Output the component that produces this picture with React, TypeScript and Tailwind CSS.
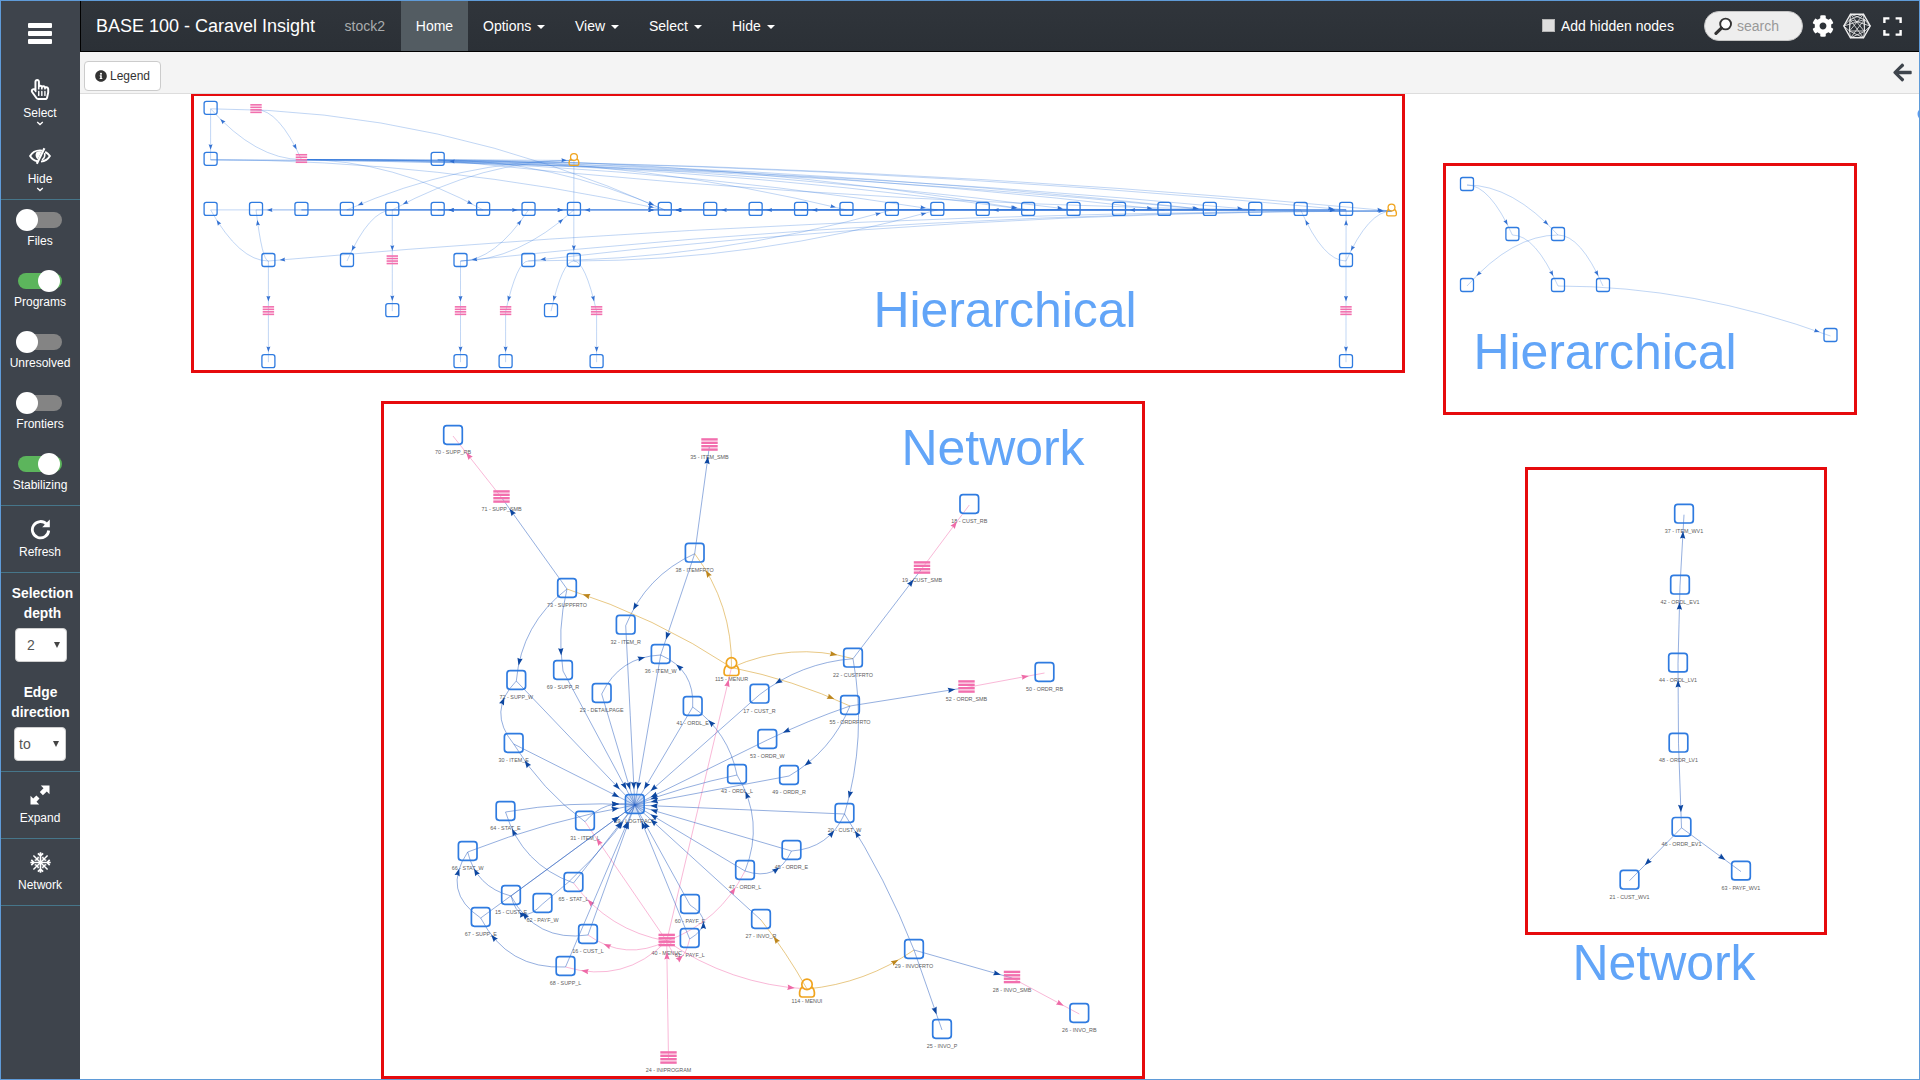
import React from "react";
import { FaCog, FaArrowLeft, FaInfoCircle, FaRegHandPointer } from "react-icons/fa";

type Kind = "box" | "stack" | "person";
type Pt = { x: number; y: number; k: Kind };
type Tone = "blue" | "pink" | "gold" | "light";

const tones: Record<Tone, { line: string; head: string; op: number; headOp: number; w: number }> = {
  blue: { line: "#2b5fc0", head: "#0d47a1", op: 0.5, headOp: 1, w: 1 },
  pink: { line: "#f472b0", head: "#ee6aa7", op: 0.5, headOp: 1, w: 1 },
  gold: { line: "#d69a20", head: "#bd861c", op: 0.55, headOp: 1, w: 1 },
  light: { line: "#2b74d8", head: "#2b6bd0", op: 0.33, headOp: 0.95, w: 0.9 },
};

function Edge({ a, b, c, tone, size, hw, top, bottom }: { a: Pt; b: Pt; c: { x: number; y: number }; tone: Tone; size: number; hw: number; top: number; bottom: number }) {
  const t0 = tones[tone];
  const at = (t: number) => ({
    x: (1 - t) * (1 - t) * a.x + 2 * t * (1 - t) * c.x + t * t * b.x,
    y: (1 - t) * (1 - t) * a.y + 2 * t * (1 - t) * c.y + t * t * b.y,
  });
  let t = 1;
  while (t > 0.02) {
    const p = at(t);
    if (Math.abs(p.x - b.x) > hw || p.y < b.y - top || p.y > b.y + bottom) break;
    t -= 0.002;
  }
  const tip = at(t);
  const back = at(Math.max(0, t - 0.03));
  const ang = (Math.atan2(tip.y - back.y, tip.x - back.x) * 180) / Math.PI;
  return (
    <g>
      <path d={`M${a.x} ${a.y}Q${c.x} ${c.y} ${b.x} ${b.y}`} fill="none" stroke={t0.line} strokeOpacity={t0.op} strokeWidth={t0.w} />
      <path
        d={`M0 0L${-size} ${-size * 0.36}L${-size * 0.88} 0L${-size} ${size * 0.36}Z`}
        fill={t0.head}
        fillOpacity={t0.headOp}
        transform={`translate(${tip.x} ${tip.y}) rotate(${ang})`}
      />
    </g>
  );
}

function Node({ n, big }: { n: Pt; big?: boolean }) {
  const s = big ? 18.6 : 13;
  if (n.k === "box")
    return <rect x={n.x - s / 2} y={n.y - s / 2} width={s} height={s} rx={big ? 3 : 2.2} fill="none" stroke="#2f7be0" strokeWidth={big ? 1.7 : 1.3} />;
  if (n.k === "stack") {
    const w = big ? 16.4 : 11.4;
    const gap = big ? 3.4 : 2.5;
    const h = big ? 2.4 : 1.6;
    return (
      <g fill="#f26fae">
        {[-1.5, -0.5, 0.5, 1.5].map((i) => (
          <rect key={i} x={n.x - w / 2} y={n.y + i * gap - h / 2} width={w} height={h} />
        ))}
      </g>
    );
  }
  const f = big ? 1 : 0.66;
  return (
    <g transform={`translate(${n.x} ${n.y}) scale(${f})`} fill="none" stroke="#f0a41e" strokeWidth={big ? 1.7 : 2}>
      <path d="M-4.6 -1C-7 0.5 -7.6 3 -7.4 6.5Q-7.2 9 -5 9H5Q7.2 9 7.4 6.5C7.6 3 7 0.5 4.6 -1" />
      <circle cx="0" cy="-3.6" r="5.2" />
    </g>
  );
}

const P = (x: number, y: number, k: Kind = "box"): Pt => ({ x, y, k });
const col = (i: number) => 210.6 + 45.42 * i;

const tree: Record<string, Pt> = {
  a0: P(col(0), 107.8),
  s1: P(col(1), 108.6, "stack"),
  b0: P(col(0), 158.8),
  s2: P(col(2), 158.5, "stack"),
  b5: P(col(5), 158.8),
  p8: P(col(8), 159.4, "person"),
  p26: P(col(26), 210, "person"),
  d268: P(268.4, 260),
  d347: P(347, 260),
  d392: P(392.3, 259.8, "stack"),
  d460: P(460.5, 260),
  d528: P(528.3, 260),
  d573: P(573.8, 260),
  d1346: P(1346, 260),
  e268: P(268.4, 310.6, "stack"),
  e392: P(392.3, 310.2),
  e460: P(460.5, 310.6, "stack"),
  e505: P(505.6, 310.6, "stack"),
  e551: P(551, 310.2),
  e596: P(596.6, 310.6, "stack"),
  e1346: P(1346, 310.6, "stack"),
  f268: P(268.4, 361.2),
  f460: P(460.5, 361.2),
  f505: P(505.6, 361.2),
  f596: P(596.6, 361.2),
  f1346: P(1346, 361.2),
};
for (let i = 0; i < 26; i++) if (i !== 9) tree[`c${i}`] = P(col(i), 208.9);

const treeEdges =
  "a0>b0 s2>a0 s1>s2 a0>c10 b0>c10 b5>c10 s2>c6 s2>p8 s2>p26 s2>c25 s2>c22 s2>c21 s2>c18 s2>c19 s2>c16 b0>c23 b0>c22 b5>c14 b5>c18 p26>b5 p8>c3 p8>c4 p8>d573 p26>d268 p26>d460 p26>d528 d528>c15 d573>c16 d268>c0 d268>c1 c4>d347 c4>d392 d460>c7 d460>c8 d460>e460 d528>e505 d573>e551 d573>e596 p26>d1346 d1346>c24 d1346>c25 d268>e268 e268>f268 d392>e392 e460>f460 e505>f505 e596>f596 d1346>e1346 e1346>f1346 c0>c8 c25>c1 c6>c5 c25>c8 c2>c8 c3>c10 c4>c10 c2>c10 c25>c10 c24>c10 c23>c10 c22>c11 c20>c12 c19>c13 c21>c17 c23>c20 c10>c25 c10>c25 c23>c10 c12>p26 c2>c7 c10>c5"
    .split(" ")
    .map((s) => s.split(">"));

const smallTree: Record<string, Pt> = {
  a: P(1467, 184),
  b: P(1512.4, 234),
  c: P(1558, 234),
  d: P(1467, 285),
  e: P(1558, 285),
  f: P(1603, 285),
  g: P(1830.5, 335),
};
const smallEdges = "a>b a>c b>e c>d c>f e>g".split(" ").map((s) => s.split(">"));

const net: Record<string, [number, number, string, Kind?]> = {
  "70": [453, 435, "SUPP_RB"],
  "71": [501.5, 496.5, "SUPP_SMB", "stack"],
  "35": [709.5, 444.5, "ITEM_SMB", "stack"],
  "38": [694.7, 552.7, "ITEMFRTO"],
  "73": [567, 588, "SUPPFRTO"],
  "32": [625.7, 624.7, "ITEM_R"],
  "36": [660.7, 654, "ITEM_W"],
  "69": [563, 670, "SUPP_R"],
  "72": [516.3, 680, "SUPP_W"],
  "23": [601.7, 693, "DETAILPAGE"],
  "115": [731.5, 666.5, "MENUR", "person"],
  "41": [692.7, 706, "ORDL_E"],
  "17": [759.5, 693.7, "CUST_R"],
  "30": [513.7, 743, "ITEM_E"],
  "53": [767.3, 739, "ORDR_W"],
  "18": [969.3, 504, "CUST_RB"],
  "19": [922, 567.5, "CUST_SMB", "stack"],
  "22": [853, 657.7, "CUSTFRTO"],
  "55": [850, 705, "ORDRFRTO"],
  "52": [966.5, 686.5, "ORDR_SMB", "stack"],
  "50": [1044.5, 672, "ORDR_RB"],
  "64": [505.5, 811, "STAT_E"],
  "31": [585, 820.7, "ITEM_L"],
  "66": [467.7, 851, "STAT_W"],
  "65": [573.5, 882, "STAT_L"],
  "15": [511, 895, "CUST_E"],
  "62": [542.5, 903, "PAYF_W"],
  "67": [480.7, 917, "SUPP_E"],
  "16": [588, 934, "CUST_L"],
  "68": [565.5, 966, "SUPP_L"],
  "40": [666.7, 940, "MENUC", "stack"],
  "60": [690, 904, "PAYF_E"],
  "61": [689.7, 938, "PAYF_L"],
  "27": [761, 919, "INVO_R"],
  "114": [807, 988, "MENUI", "person"],
  "24": [668.5, 1057.5, "INIPROGRAM", "stack"],
  "39": [634.8, 804, "LOGTRACE"],
  "43": [737, 774, "ORDL_L"],
  "49": [789, 775, "ORDR_R"],
  "45": [791.5, 850, "ORDR_E"],
  "47": [745, 870, "ORDR_L"],
  "20": [844.5, 813, "CUST_W"],
  "29": [914, 949, "INVOFRTO"],
  "28": [1012, 977, "INVO_SMB", "stack"],
  "26": [1079.3, 1013, "INVO_RB"],
  "25": [942, 1029, "INVO_P"],
  "37": [1684, 513.7, "ITEM_WV1"],
  "42": [1680, 584.7, "ORDL_EV1"],
  "44": [1678, 662.6, "ORDL_LV1"],
  "48": [1678.5, 742.7, "ORDR_LV1"],
  "46": [1681.5, 826.8, "ORDR_EV1"],
  "21": [1629.5, 879.7, "CUST_WV1"],
  "63": [1741, 870.6, "PAYF_WV1"],
};

const netEdges: [string, string, number][] = [
  ["73", "71", 0], ["71", "70", 0], ["38", "35", 0], ["38", "32", 0.2], ["38", "36", 0], ["73", "72", 0.22], ["73", "69", 0.1],
  ["23", "36", -0.3], ["41", "36", 0.35], ["43", "41", 0.2], ["30", "72", -0.45],
  ["115", "73", 0.07], ["115", "38", 0.17], ["115", "22", -0.18], ["115", "55", -0.06], ["40", "115", 0],
  ["22", "17", 0.15], ["22", "19", 0], ["19", "18", 0], ["22", "20", -0.12], ["55", "52", 0], ["52", "50", 0], ["55", "53", 0.03], ["55", "49", -0.17],
  ["45", "20", 0.3], ["29", "20", 0.05], ["114", "27", 0.04], ["114", "29", 0.13], ["29", "28", 0], ["28", "26", 0], ["29", "25", 0],
  ["47", "45", 0.45], ["47", "43", 0.25], ["40", "47", 0.2], ["40", "61", 1.5], ["61", "60", 0.8], ["40", "31", 0], ["31", "30", -0.1],
  ["65", "64", -0.25], ["40", "65", -0.2], ["40", "16", -0.3], ["40", "68", -0.3], ["68", "67", -0.32], ["16", "15", -0.35],
  ["67", "66", -0.5], ["15", "66", -0.3], ["15", "62", 0.9], ["24", "40", 0], ["40", "114", 0.14],
  ["64", "39", -0.06], ["66", "39", -0.05], ["31", "39", -0.3], ["62", "39", 0.08], ["69", "39", 0], ["72", "39", 0], ["23", "39", 0],
  ["32", "39", 0], ["36", "39", 0], ["41", "39", 0], ["17", "39", 0], ["53", "39", 0], ["43", "39", 0.04], ["49", "39", 0], ["20", "39", 0],
  ["45", "39", 0], ["47", "39", 0], ["27", "39", 0], ["60", "39", 0], ["61", "39", 0], ["68", "39", 0], ["16", "39", 0], ["65", "39", 0],
  ["15", "39", 0], ["67", "39", 0], ["30", "39", 0],
  ["42", "37", 0], ["44", "42", 0], ["48", "44", 0], ["48", "46", 0], ["46", "21", 0], ["46", "63", 0],
];

const labelOffset: Record<Kind, number> = { box: 19.4, stack: 14.8, person: 14.8 };

const frames = [
  [192.5, 94.5, 1211, 277],
  [1444.5, 164.5, 411, 249],
  [382.5, 402.5, 761, 675],
  [1526.5, 468.5, 299, 465],
];

const captions: [number, number, string, number][] = [
  [873.5, 327, "Hierarchical", 263],
  [1473.5, 369, "Hierarchical", 263],
  [901.5, 465, "Network", 183],
  [1572.5, 980, "Network", 183],
];

function GraphCanvas() {
  const np = (id: string) => P(net[id][0], net[id][1], net[id][3] ?? "box");
  const tre = (m: Record<string, Pt>, list: string[][]) =>
    list.map(([f, t], i) => {
      const a = { ...m[f], y: m[f].y + 1 };
      const b = { ...m[t], y: m[t].y + 1 };
      return <Edge key={i} a={a} b={b} c={{ x: (a.x + b.x) / 2, y: a.y }} tone="light" size={5.5} hw={m[t].k === "box" ? 10.5 : 7} top={10} bottom={10} />;
    });
  return (
    <svg className="block h-[985px] w-full" viewBox="80 94 1839 985" preserveAspectRatio="xMinYMin slice">
      {frames.map(([x, y, w, h]) => (
        <rect key={x} x={x} y={y} width={w} height={h} fill="none" stroke="#e60a0d" strokeWidth="3" />
      ))}
      {tre(tree, treeEdges)}
      {tre(smallTree, smallEdges)}
      {Object.entries(tree).map(([k, n]) => <Node key={k} n={n} />)}
      {Object.entries(smallTree).map(([k, n]) => <Node key={k} n={n} />)}
      {Object.entries(net).map(([id, [x, y, name, k]]) => (
        <text key={id} x={x} y={y + labelOffset[k ?? "box"]} textAnchor="middle" fontSize="5.4" fill="#5c5c5c" fontFamily="'Liberation Sans', sans-serif">
          {id} - {name}
        </text>
      ))}
      {netEdges.map(([f, t, bend], i) => {
        const a = np(f);
        const b = np(t);
        a.y += 1;
        b.y += 1;
        const dx = b.x - a.x;
        const dy = b.y - a.y;
        const tone: Tone = a.k === "stack" ? "pink" : a.k === "person" ? "gold" : "blue";
        return (
          <Edge key={i} a={a} b={b} c={{ x: (a.x + b.x) / 2 - dy * bend, y: (a.y + b.y) / 2 + dx * bend }} tone={tone} size={7.4}
            hw={b.k === "stack" ? 11 : b.k === "person" ? 12 : 15.5} top={15.5} bottom={b.k === "stack" ? 11 : b.k === "person" ? 12 : 16.5} />
        );
      })}
      {Object.keys(net).map((id) => <Node key={id} n={np(id)} big />)}
      <rect x="626.5" y="795.7" width="16.6" height="16.6" fill="#2f6fd0" fillOpacity="0.22" />
      {captions.map(([x, y, s, w]) => (
        <text key={`${x}`} x={x} y={y} fontSize="50" textLength={w} fill="#62a5f8" fontFamily="'Liberation Sans', Arial, sans-serif">{s}</text>
      ))}
      <circle cx="1924.5" cy="114" r="7" fill="#5b9bf0" />
    </svg>
  );
}

function Caret() {
  return <span className="mt-0.5 ml-[6px] h-0 w-0 border-x-4 border-t-4 border-x-transparent border-t-white" />;
}

function Chevron() {
  return (
    <svg className="mx-auto h-[5px] w-2" viewBox="0 0 8 5" fill="none" stroke="#fff" strokeWidth="1.3"><path d="M1.2 1L4 3.6L6.8 1" /></svg>
  );
}

function Toggle({ on, label }: { on?: boolean; label: string }) {
  return (
    <div className="flex h-[61px] flex-col items-center">
      <div className={on ? "flex h-4 w-11 items-center justify-end rounded-full bg-[#5cb55c] pr-0.5" : "flex h-4 w-11 items-center rounded-full bg-[#848484]"}>
        <span className={on ? "h-[22px] w-[22px] shrink-0 rounded-full bg-white" : "-ml-0.5 h-[22px] w-[22px] shrink-0 rounded-full bg-white"} />
      </div>
      <span className="mt-[5px] text-xs leading-4">{label}</span>
    </div>
  );
}

function SelectBox({ value, className }: { value: string; className: string }) {
  return (
    <div className={`flex h-[34px] w-[52px] items-center justify-between rounded border border-[#cfcfcf] bg-white pr-1.5 text-sm text-[#555] ${className}`}>
      <span>{value}</span>
      <span className="h-0 w-0 border-x-[3px] border-t-[6px] border-x-transparent border-t-[#444]" />
    </div>
  );
}

function Sidebar() {
  return (
    <aside className="flex w-[79px] shrink-0 flex-col bg-[#3e444c] text-white">
      <div className="flex h-[51px] shrink-0 flex-col items-center gap-[3.5px] pt-[22px] pr-px">
        {[0, 1, 2].map((i) => <span key={i} className="h-[4.5px] w-6 shrink-0 rounded-[1px] bg-white" />)}
      </div>
      <div className="flex h-[148px] flex-col border-b border-[#46768a] pt-[27px] pr-px text-center text-xs">
        <FaRegHandPointer className="mx-auto h-[21px] w-[20px]" />
        <span className="mt-[5px] leading-4">Select</span>
        <Chevron />
        <svg className="mx-auto mt-[21px] h-[18px] w-[22px]" viewBox="0 0 22 18" fill="none" stroke="#fff" strokeWidth="1.9">
          <path d="M8.5 14.3C5 13.6 2.6 11.6 1.1 9C3 5.6 6.6 3.4 11 3.4Q12 3.4 13 3.6" />
          <path d="M16.2 4.9Q19.2 6.4 20.9 9C19 12.2 16 14.2 12 14.6" />
          <path d="M15.4 1.2L7.8 16.8" strokeWidth="2.1" />
          <path d="M7.4 5.2C5.8 7.6 6.6 10.8 8.8 12.2L12.6 4.6C10.6 4 8.6 4 7.4 5.2Z" fill="#fff" stroke="none" />
          <path d="M15.6 6C16.2 8.8 15.2 11.4 13 12.8" strokeWidth="1.6" />
        </svg>
        <span className="mt-1.5 leading-4">Hide</span>
        <Chevron />
      </div>
      <div className="h-[306px] border-b border-[#46768a] pt-[12px] pr-px">
        <Toggle label="Files" />
        <Toggle on label="Programs" />
        <Toggle label="Unresolved" />
        <Toggle label="Frontiers" />
        <Toggle on label="Stabilizing" />
      </div>
      <div className="flex h-[67px] flex-col items-center border-b border-[#46768a] pt-[13px] pr-px text-xs">
        <svg className="h-[21px] w-[21px]" viewBox="0 0 21 21"><path d="M16.6 5.2A8.2 8.2 0 1 0 18.7 11.5" fill="none" stroke="#fff" strokeWidth="2.8" /><path d="M19.8 0.6V8.2H12.2Z" fill="#fff" /></svg>
        <span className="mt-1 leading-4">Refresh</span>
      </div>
      <div className="h-[199px] border-b border-[#46768a] pt-[11px] text-center text-[13.8px] leading-5 font-bold">
        <p className="pl-1">Selection<br />depth</p>
        <div className="mt-1 font-normal"><SelectBox value="2" className="ml-[14px] pl-[11px]" /></div>
        <p className="mt-[21px]">Edge<br />direction</p>
        <div className="mt-1 font-normal"><SelectBox value="to" className="ml-[13px] pl-1" /></div>
      </div>
      <div className="flex h-[67px] flex-col items-center border-b border-[#46768a] pt-[13px] pr-px text-xs">
        <svg className="h-5 w-5" viewBox="0 0 20 20" fill="#fff"><path d="M10.8 0.5H19.5V9.2L16.8 6.5L12.9 10.2L9.8 7.1L13.5 3.2ZM9.2 19.5H0.5V10.8L3.2 13.5L6.4 10.5L9.5 13.6L6.5 16.8Z" /></svg>
        <span className="mt-[5px] leading-4">Expand</span>
      </div>
      <div className="flex h-[67px] flex-col items-center border-b border-[#46768a] pt-[13px] pr-px text-xs">
        <svg className="h-[21px] w-[21px]" viewBox="-10.5 -10.5 21 21" stroke="#fff" fill="none">
          {[0, 90, 180, 270].map((r) => (
            <path key={r} transform={`rotate(${r})`} d="M0 0V-10.2M-2.6 -9.2L0 -6.6L2.6 -9.2" strokeWidth="1.7" />
          ))}
          {[45, 135, 225, 315].map((r) => (
            <path key={r} transform={`rotate(${r})`} d="M0 0V-10M-2.6 -5.6L0 -4.4L2.6 -5.6" strokeWidth="1.5" />
          ))}
        </svg>
        <span className="mt-1 leading-4">Network</span>
      </div>
    </aside>
  );
}

function Header() {
  return (
    <header className="flex h-[51px] shrink-0 items-stretch border-b border-l border-black bg-gradient-to-b from-[#30353b] to-[#2b3036] text-sm text-white">
      <div className="flex w-[320px] items-center justify-between pr-[16px] pl-[15px]">
        <span className="w-[219px] text-lg whitespace-nowrap">BASE 100 - Caravel Insight</span>
        <span className="text-[#a9acae]">stock2</span>
      </div>
      <div className="flex w-[67px] items-center justify-center bg-[#535c62]">Home</div>
      <nav className="flex items-center pl-[15px]">
        <span className="flex w-[92px] items-center">Options<Caret /></span>
        <span className="flex w-[74px] items-center">View<Caret /></span>
        <span className="flex w-[83px] items-center">Select<Caret /></span>
        <span className="flex items-center">Hide<Caret /></span>
      </nav>
      <div className="ml-auto flex items-center pr-[17px]">
        <span className="mb-px h-[13px] w-[13px] border border-[#b5b5b5] bg-[#dedede]" />
        <span className="ml-1.5 w-[143px]">Add hidden nodes</span>
        <div className="flex h-[30px] w-[99px] items-center rounded-full border border-[#c4c4c4] bg-[#eee] pl-[9px] text-[#999]">
          <svg className="h-[19px] w-[19px]" viewBox="0 0 19 19" fill="none" stroke="#333"><circle cx="11.6" cy="7" r="5.4" strokeWidth="1.9" fill="#fff" /><path d="M7.4 11.2L2 16.4" strokeWidth="3.2" strokeLinecap="round" /></svg>
          <span className="ml-1">search</span>
        </div>
        <FaCog className="ml-[9px] h-[22px] w-[22px]" />
        <svg className="ml-[9px] h-[26px] w-7" viewBox="0 0 28 26" fill="none" stroke="#eee" strokeWidth="1">
          <path d="M7.5 1.2H20.5L27.2 13L20.5 24.8H7.5L0.8 13Z" strokeWidth="1.4" />
          <path d="M7.5 1.2L6.5 18L20.5 24.8M20.5 1.2L6.5 18M7.5 1.2L21.5 18.5M20.5 1.2L21.5 18.5L7.5 24.8M7 6.5L27.2 13M7 6.5L20.5 1.2M7 6.5L20.5 24.8M21.5 6.5L0.8 13M21.5 6.5L7.5 24.8M7.5 1.2L21.5 6.5M6.5 18H21.5M6.5 18L0.8 13L7 6.5L6.5 18L7.5 24.8M21.5 18.5L27.2 13L21.5 6.5V18.5L20.5 24.8" strokeWidth="0.8" />
        </svg>
        <svg className="ml-[12px] h-[19px] w-[19px]" viewBox="0 0 19 19" fill="none" stroke="#fff" strokeWidth="2.4"><path d="M1.4 6V1.4H6.4M12.6 1.4H17.6V6M17.6 13V17.6H12.6M6.4 17.6H1.4V13" /></svg>
      </div>
    </header>
  );
}

export default function App() {
  return (
    <div className="flex h-[1080px] w-[1920px] overflow-hidden border border-[#5f9bd8] bg-white font-['Liberation_Sans',Arial,sans-serif]">
      <Sidebar />
      <main className="flex min-w-0 flex-1 flex-col">
        <Header />
        <div className="flex h-[42px] shrink-0 items-center justify-between border-b border-[#ddd] bg-[#f4f4f4] pr-[7px] pl-1">
          <button className="mt-[7px] flex h-[30px] w-[77px] items-center justify-center gap-[3px] rounded border border-[#ccc] bg-white text-xs text-[#333]">
            <FaInfoCircle className="h-3 w-3" />
            Legend
          </button>
          <FaArrowLeft className="h-[21px] w-[19px] text-[#3e444c]" />
        </div>
        <GraphCanvas />
      </main>
    </div>
  );
}
